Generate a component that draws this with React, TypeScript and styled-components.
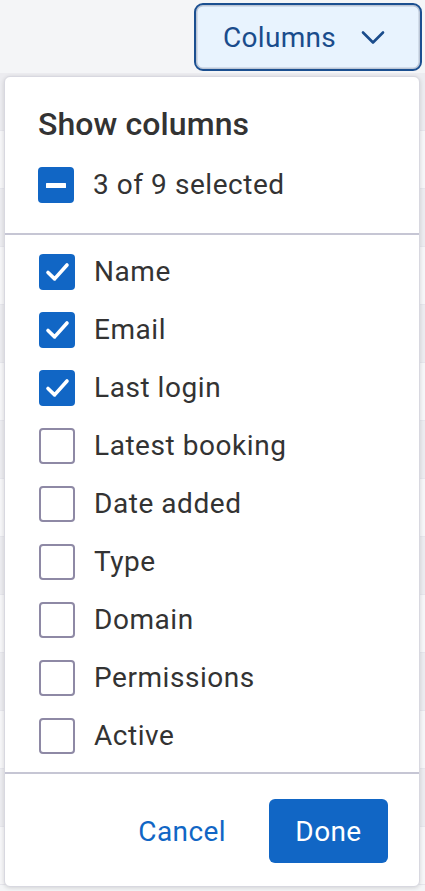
import React, { useState } from "react";
import styled, { createGlobalStyle } from "styled-components";

const Global = createGlobalStyle`
  html, body { margin: 0; padding: 0; background: #f4f5f7; }
  body { font-family: Roboto, "Liberation Sans", Arial, sans-serif; color: #333; }
  * { box-sizing: border-box; }
`;

const Page = styled.div`
  position: relative;
  width: 425px;
  height: 891px;
  overflow: hidden;
  background: #f4f5f7;
`;

const Toolbar = styled.div`
  display: flex;
  justify-content: flex-end;
  padding: 3px 3px 0 0;
`;

const ColumnsButton = styled.button`
  display: flex;
  align-items: center;
  gap: 25px;
  width: 228px;
  height: 68px;
  padding: 0 0 0 27px;
  border: 2.5px solid #1b4f90;
  border-radius: 9px;
  background: #e8f3fe;
  box-shadow: inset 0 0 0 1.5px #bcc6d6;
  color: #1a4c8c;
  font-family: Roboto, "Liberation Sans", Arial, sans-serif;
  font-size: 28px;
  letter-spacing: 0.3px;
  cursor: pointer;
`;

const BackdropRows = styled.div`
  display: flex;
  flex-direction: column;
  margin-top: 2px;
`;

const BackdropRow = styled.div<{ $shade: string }>`
  height: 58px;
  background: ${(p) => p.$shade};
  border-bottom: 1px solid #e6e6ec;
`;

const Popover = styled.div`
  position: absolute;
  left: 4px;
  top: 76px;
  width: 416px;
  height: 811px;
  background: #fff;
  border: 1px solid #d8d8e0;
  border-radius: 6px;
  box-shadow: 0 1px 4px rgba(0, 0, 0, 0.14);
  display: flex;
  flex-direction: column;
`;

const Header = styled.div`
  display: flex;
  flex-direction: column;
  gap: 24px;
  padding: 28px 0 30px 33px;
  border-bottom: 2px solid #c6c6d4;
`;

const Title = styled.div`
  font-size: 32px;
  font-weight: 500;
  color: #333;
  line-height: 38px;
  letter-spacing: 0.1px;
`;

const List = styled.div`
  display: flex;
  flex-direction: column;
  gap: 22px;
  padding: 19px 0 18px 34px;
  border-bottom: 2px solid #c6c6d4;
`;

const Row = styled.label`
  display: flex;
  align-items: center;
  gap: 19px;
  font-size: 28px;
  line-height: 36px;
  color: #333;
  letter-spacing: 0.55px;
  cursor: pointer;
`;

const Box = styled.span<{ $on: boolean }>`
  display: flex;
  align-items: center;
  justify-content: center;
  flex: none;
  width: 36px;
  height: 36px;
  border-radius: 4px;
  background: ${(p) => (p.$on ? "#1166c5" : "#fff")};
  border: ${(p) => (p.$on ? "none" : "2px solid #8e89a5")};
`;

const Footer = styled.div`
  display: flex;
  justify-content: flex-end;
  align-items: center;
  gap: 43px;
  padding: 25px 31px 0 0;
`;

const TextButton = styled.button`
  border: none;
  background: none;
  color: #1166c5;
  font-family: Roboto, "Liberation Sans", Arial, sans-serif;
  font-size: 28px;
  letter-spacing: 0.4px;
  padding: 0;
  cursor: pointer;
`;

const PrimaryButton = styled.button`
  width: 119px;
  height: 64px;
  border: none;
  border-radius: 6px;
  background: #1166c5;
  color: #fff;
  font-family: Roboto, "Liberation Sans", Arial, sans-serif;
  font-size: 28px;
  letter-spacing: 0.4px;
  cursor: pointer;
`;

const Check = () => (
  <svg width="36" height="36" viewBox="0 0 36 36" fill="none">
    <path d="M9 18.5l6.6 6.4L28 11" stroke="#fff" strokeWidth="3.6" strokeLinecap="round" strokeLinejoin="round" />
  </svg>
);

const Dash = () => (
  <svg width="20" height="5" viewBox="0 0 20 5">
    <rect x="0" y="0" width="20" height="5" rx="0.5" fill="#fff" />
  </svg>
);

const Chevron = () => (
  <svg width="24" height="15" viewBox="0 0 24 15" fill="none">
    <path d="M2 2.5l10 10 10-10" stroke="#1a4c8c" strokeWidth="2.6" strokeLinecap="round" strokeLinejoin="round" />
  </svg>
);

const columns = [
  "Name",
  "Email",
  "Last login",
  "Latest booking",
  "Date added",
  "Type",
  "Domain",
  "Permissions",
  "Active",
];

export default function App() {
  const [selected, setSelected] = useState<string[]>(["Name", "Email", "Last login"]);
  const toggle = (c: string) =>
    setSelected((s) => (s.includes(c) ? s.filter((x) => x !== c) : [...s, c]));
  const shades = ["#ececf0", "#f6f6f8", "#ececf0", "#f6f6f8", "#ececf0", "#f6f6f8", "#ececf0", "#f6f6f8", "#ececf0", "#f6f6f8", "#ececf0", "#f6f6f8", "#ececf0", "#f6f6f8"];
  return (
    <>
      <Global />
      <Page>
        <Toolbar>
          <ColumnsButton>
            Columns
            <Chevron />
          </ColumnsButton>
        </Toolbar>
        <BackdropRows>
          {shades.map((s, i) => (
            <BackdropRow key={i} $shade={s} />
          ))}
        </BackdropRows>
        <Popover>
          <Header>
            <Title>Show columns</Title>
            <Row>
              <Box $on={true}>
                <Dash />
              </Box>
              {selected.length} of {columns.length} selected
            </Row>
          </Header>
          <List>
            {columns.map((c) => {
              const on = selected.includes(c);
              return (
                <Row key={c} onClick={() => toggle(c)}>
                  <Box $on={on}>{on && <Check />}</Box>
                  {c}
                </Row>
              );
            })}
          </List>
          <Footer>
            <TextButton>Cancel</TextButton>
            <PrimaryButton>Done</PrimaryButton>
          </Footer>
        </Popover>
      </Page>
    </>
  );
}
